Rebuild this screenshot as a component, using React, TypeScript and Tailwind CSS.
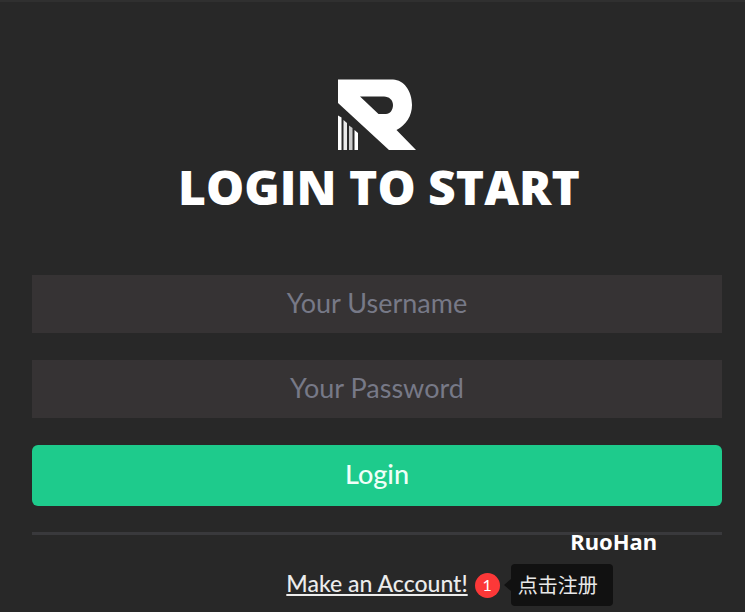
import React from "react";

function Logo() {
  return (
    <svg className="h-[72px] w-[78px]" viewBox="0 0 78 72" fill="#ffffff" role="img" aria-label="R">
      <path
        fillRule="evenodd"
        d="M0 0.500H55C66 1 74 12 74 26C74 37 68 46 58.500 51L78 71H51L0 24ZM22 17.500L40.500 35H48C52 35 55 31 55 26C55 21 51 17.500 46 17.500Z"
      />
      <path d="M0 36.500L3.500 38.500V71H0Z" />
      <path d="M5.500 41L9 44V71H5.500Z" opacity="0.900" />
      <path d="M11 46.500L14.500 49V71H11Z" opacity="0.750" />
      <path d="M16.500 51L20 54V71H16.500Z" />
    </svg>
  );
}

const fieldClass =
  "h-[58px] w-full bg-[#363334] px-4 pb-1 text-center font-[Lato,sans-serif] text-[27px] text-white outline-none placeholder:text-[#777987]";

export default function App() {
  return (
    <main className="min-h-screen border-t-2 border-[#303030] bg-[#282828] pt-[77px] pr-[23px] pb-2 pl-8">
      <header className="flex flex-col items-center">
        <Logo />
        <h1 className="mt-1 pl-1 text-center font-['Open_Sans',sans-serif] text-5xl leading-[64px] font-extrabold text-white">
          LOGIN TO START
        </h1>
      </header>

      <form className="mt-14 flex flex-col" onSubmit={(event) => event.preventDefault()}>
        <input className={fieldClass} type="text" placeholder="Your Username" aria-label="Your Username" />
        <input
          className={`mt-[27px] ${fieldClass}`}
          type="password"
          placeholder="Your Password"
          aria-label="Your Password"
        />
        <button
          type="submit"
          className="mt-[27px] h-[61px] w-full rounded-md bg-[#1ecb8c] pb-0.5 font-[Lato,sans-serif] text-[27px] font-medium text-[#f0fff8]"
        >
          Login
        </button>
      </form>

      <div className="relative mt-[26px]">
        <hr className="border-t-[3px] border-[#39393c]" />
        <span className="absolute -top-1 right-[65px] font-['Noto_Sans',sans-serif] text-[22px] leading-[26px] font-bold text-white">
          RuoHan
        </span>
      </div>

      <div className="mt-8 flex justify-center">
        <div className="relative">
          <a
            href="#register"
            className="block font-[Lato,sans-serif] text-[23px] leading-8 font-medium text-[#ececec] underline decoration-2 underline-offset-2"
          >
            Make an Account!
          </a>
          <div className="absolute top-0 left-full ml-[7px] flex h-9 items-center">
            <span className="flex size-[25px] items-center justify-center rounded-full bg-[#fc3838] font-[Lato,sans-serif] text-base text-white">
              1
            </span>
            <span className="ml-1 h-0 w-0 border-y-[6px] border-r-[7px] border-y-transparent border-r-[#111111]" />
            <span
              role="tooltip"
              className="flex h-[42px] w-[102px] items-center rounded bg-[#111111] pl-[7px] font-['Noto_Sans_CJK_SC',sans-serif] text-xl whitespace-nowrap text-[#e8e8e8]"
            >
              点击注册
            </span>
          </div>
        </div>
      </div>
    </main>
  );
}
